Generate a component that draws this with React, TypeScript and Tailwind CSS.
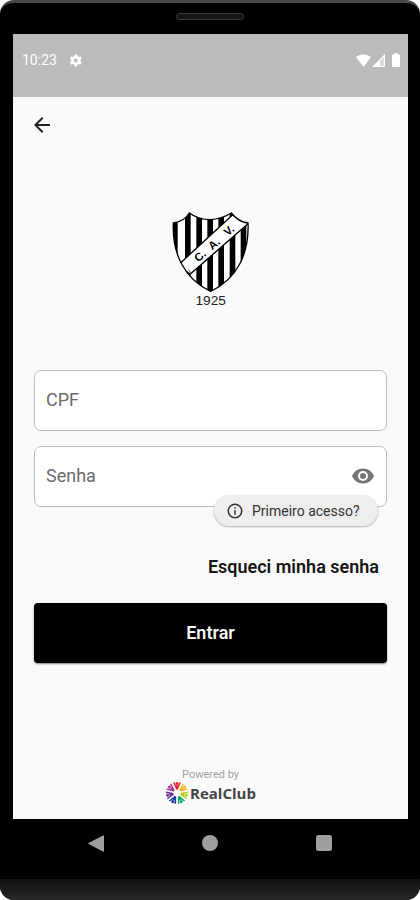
import React from "react";

function Crest() {
  return (
    <svg viewBox="33 31 237 282" className="h-[94px] w-[79px] overflow-visible" role="img" aria-label="C.A.V. 1925">
      <defs>
        <clipPath id="shield">
          <path d="M40 70Q72 66 88 40Q116 60 150 60Q186 58 214 40Q234 66 264 70C268 160 232 238 152 275C72 238 36 160 40 70Z" />
        </clipPath>
      </defs>
      <g clipPath="url(#shield)">
        <rect x="30" y="30" width="245" height="250" fill="#fff" />
        <g fill="#000">
          <rect x="36" y="30" width="17" height="250" />
          <rect x="75" y="30" width="17" height="250" />
          <rect x="109" y="30" width="17" height="250" />
          <rect x="142" y="30" width="17" height="250" />
          <rect x="175" y="30" width="17" height="250" />
          <rect x="209" y="30" width="17" height="250" />
          <rect x="242" y="30" width="17" height="250" />
        </g>
        <path d="M56 195L226 38L280 60L94 220L84 206L92 222Z" fill="#fff" />
        <path d="M56 195L226 38M92 222L276 62" fill="none" stroke="#000" strokeWidth="4" />
      </g>
      <path
        d="M40 70Q72 66 88 40Q116 60 150 60Q186 58 214 40Q234 66 264 70C268 160 232 238 152 275C72 238 36 160 40 70Z"
        fill="none"
        stroke="#000"
        strokeWidth="4"
      />
      <g fontFamily="Liberation Sans, sans-serif" fontWeight="700" fontSize="34" textAnchor="middle">
        <text x="120" y="180" transform="rotate(-40 120 168)">C.</text>
        <text x="162" y="144" transform="rotate(-40 162 132)">A.</text>
        <text x="207" y="104" transform="rotate(-40 207 92)">V.</text>
      </g>
      <text x="152" y="316" fontFamily="Liberation Sans, sans-serif" fontSize="41" textAnchor="middle" fill="#222">
        1925
      </text>
    </svg>
  );
}

const petals = [
  { angle: 0, color: "#e3202b" },
  { angle: 52, color: "#f3b51b" },
  { angle: 103, color: "#b5cc1b" },
  { angle: 154, color: "#12a66a" },
  { angle: 206, color: "#203a9a" },
  { angle: 257, color: "#6b2a96" },
  { angle: 308, color: "#a83291" },
];

function RealClubMark() {
  return (
    <svg viewBox="-12 -12 24 24" className="size-6" aria-hidden="true">
      {petals.map((p) => (
        <g key={p.angle} transform={`rotate(${p.angle})`} fill={p.color}>
          <circle cx="0" cy="-9.6" r="1.5" />
          <path d="M-4-10.400L-2.600-10.800L-1.200-7.700H1.200L2.600-10.800L4-10.400L1.700-5.500L.9-3.600H-.9L-1.700-5.500Z" />
        </g>
      ))}
    </svg>
  );
}

function StatusBar() {
  return (
    <header className="flex h-[63px] items-start justify-between bg-[#bbbbbb] pl-[9px] pr-2 pt-4 text-white">
      <div className="flex items-center gap-3">
        <span className="text-sm leading-5">10:23</span>
        <svg viewBox="2 2 20 20" className="size-[13px]" fill="currentColor" aria-hidden="true">
          <path d="M19.4 13a7.8 7.8 0 0 0 0-2l2.2-1.7-2.1-3.7-2.7 1a8 8 0 0 0-1.8-1L14.600 2.800h-4.200L10 5.600a8 8 0 0 0-1.800 1l-2.700-1-2.100 3.700L5.600 11a7.800 7.800 0 0 0 0 2l-2.200 1.700 2.100 3.700 2.700-1a8 8 0 0 0 1.800 1l.4 2.800h4.200l.4-2.800a8 8 0 0 0 1.800-1l2.700 1 2.100-3.700ZM12.500 15a3 3 0 1 1 0-6 3 3 0 0 1 0 6Z" />
        </svg>
      </div>
      <div className="flex h-5 items-center gap-px">
        <svg viewBox="0 0 15 13" className="h-[13px] w-[15px]" fill="currentColor" aria-hidden="true">
          <path d="M0 3Q7.500-2.500 15 3L7.500 13Z" />
        </svg>
        <svg viewBox="0 0 13 13" className="size-[13px]" fill="currentColor" aria-hidden="true">
          <path d="M13 0V13H0Z" opacity=".5" />
          <path d="M8 5V13H0ZM8 12H13V13H8ZM12 1L13 0V13H12ZM8 5L13 0V1.500L8 6.500Z" />
        </svg>
        <svg viewBox="0 0 8 14" className="ml-[6px] h-[14px] w-2" fill="currentColor" aria-hidden="true">
          <path d="M2.500 0H5.500V1.500H7Q8 1.500 8 2.500V13Q8 14 7 14H1Q0 14 0 13V2.500Q0 1.500 1 1.500H2.500Z" />
        </svg>
      </div>
    </header>
  );
}

const fieldClass =
  "block h-[61px] w-full rounded-[7px] border border-[#bdbdbd] bg-white pb-[2px] pl-[11px] text-lg text-[#333] outline-none placeholder:text-[#6b6b6b] placeholder:opacity-100";

function LoginForm() {
  return (
    <form className="mt-[66px] flex flex-col" onSubmit={(e) => e.preventDefault()}>
      <input id="cpf" aria-label="CPF" placeholder="CPF" inputMode="numeric" className={fieldClass + " pr-3"} />
      <div className="relative mt-[15px]">
        <input id="senha" aria-label="Senha" type="password" placeholder="Senha" className={fieldClass + " pr-12"} />
        <button type="button" aria-label="Mostrar senha" className="absolute right-3 top-[18px] text-[#757575]">
          <svg viewBox="0 0 24 24" className="size-6" fill="currentColor" aria-hidden="true">
            <path d="M12 4.500C7 4.500 2.730 7.610 1 12c1.730 4.390 6 7.500 11 7.500s9.270-3.110 11-7.500c-1.730-4.390-6-7.500-11-7.500ZM12 17a5 5 0 1 1 0-10 5 5 0 0 1 0 10Zm0-8a3 3 0 1 0 0 6 3 3 0 0 0 0-6Z" />
          </svg>
        </button>
        <button
          type="button"
          className="absolute right-[9px] top-[49px] flex h-[31px] w-[164px] items-center gap-2 rounded-full bg-[#eeeeee] pl-3 text-sm whitespace-nowrap text-[#333] shadow-[0_1px_2px_rgba(0,0,0,0.3)]"
        >
          <svg viewBox="0 0 24 24" className="size-[18px] shrink-0" fill="currentColor" aria-hidden="true">
            <path d="M11 7h2v2h-2Zm0 4h2v6h-2Zm1-9a10 10 0 1 0 0 20 10 10 0 0 0 0-20Zm0 18a8 8 0 1 1 0-16 8 8 0 0 1 0 16Z" />
          </svg>
          Primeiro acesso?
        </button>
      </div>
      <a href="#recuperar" className="mt-12 mr-2 self-end text-lg leading-6 font-semibold text-[#151515]">
        Esqueci minha senha
      </a>
      <button
        type="submit"
        className="mt-6 h-[60px] rounded-[4px] bg-black text-lg font-semibold text-[#f5f5f5] shadow-[0_1px_2px_rgba(0,0,0,0.5)]"
      >
        Entrar
      </button>
    </form>
  );
}

export default function App() {
  return (
    <div className="min-h-screen bg-white font-['Roboto',sans-serif]">
      <div className="flex min-h-screen flex-col overflow-hidden rounded-[14px] border-t-[3px] border-[#484848] bg-black">
        <div className="flex h-[31px] items-center justify-center">
          <div className="mb-1 h-[7px] w-[68px] rounded-full border border-[#3a3a3a] bg-[#151515]" />
        </div>
        <main className="mr-3 ml-[13px] flex grow flex-col bg-[#fafafa]">
          <StatusBar />
          <div className="flex grow flex-col px-[21px]">
            <button type="button" aria-label="Voltar" className="mt-[18px] -ml-[2px] size-5 self-start text-[#222]">
              <svg viewBox="2 2 20 20" className="size-5" fill="currentColor" aria-hidden="true">
                <path d="M20 11H7.830l5.590-5.590L12 4l-8 8 8 8 1.410-1.410L7.830 13H20Z" />
              </svg>
            </button>
            <div className="mt-[75px] flex justify-center">
              <Crest />
            </div>
            <LoginForm />
            <footer className="mt-auto flex flex-col items-center pb-[14px]">
              <span className="text-[11px] leading-3 text-[#a0a0a0]">Powered by</span>
              <div className="flex items-center">
                <RealClubMark />
                <span className="ml-px font-['Open_Sans',sans-serif] text-[15px] leading-6 font-bold text-[#444]">
                  RealClub
                </span>
              </div>
            </footer>
          </div>
        </main>
        <nav aria-label="Sistema" className="flex h-12 items-center justify-between px-[88px] text-[#9e9e9e]">
          <button type="button" aria-label="Voltar ao anterior">
            <svg viewBox="0 0 16 17" className="h-[17px] w-4" fill="currentColor" aria-hidden="true">
              <path d="M15 .5Q16 0 16 1V16Q16 17 15 16.500L.5 9Q0 8.500 .5 8Z" />
            </svg>
          </button>
          <button type="button" aria-label="Início" className="size-4 rounded-full bg-[#9e9e9e]" />
          <button type="button" aria-label="Recentes" className="size-4 rounded-[2px] bg-[#9e9e9e]" />
        </nav>
        <div className="mt-3 h-[21px] bg-linear-to-b from-[#101010] to-[#282828]" />
      </div>
    </div>
  );
}
